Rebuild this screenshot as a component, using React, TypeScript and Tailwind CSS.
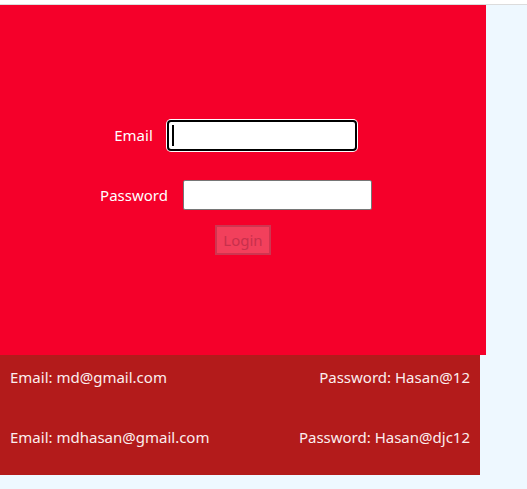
import React from "react";

const creds = [
  { email: "md@gmail.com", password: "Hasan@12" },
  { email: "mdhasan@gmail.com", password: "Hasan@djc12" },
];

export default function App() {
  return (
    <div
      className="min-h-screen bg-[#eef8ff] text-[15px]"
      style={{ fontFamily: '"Noto Sans", "Open Sans", sans-serif' }}
    >
      <div className="h-[5px] bg-white border-b border-[#dcdcdc]" />

      {/* login panel */}
      <div className="w-[486px] h-[350px] bg-[#f5002a] pt-[115px] flex flex-col">
        <div className="flex items-center justify-center pr-[15px]">
          <label className="text-white mr-[14px]">Email</label>
          <div className="relative w-[190px] h-[31px] rounded-[4px] border-2 border-black bg-white ring-1 ring-white">
            <span className="absolute left-[3px] top-[3px] w-[2px] h-[21px] bg-black" />
          </div>
        </div>

        <div className="flex items-center justify-center pr-[14px] mt-[29px]">
          <label className="text-white mr-[15px]">Password</label>
          <input className="w-[189px] h-[30px] border border-[#767676] bg-white rounded-[2px]" />
        </div>

        <div className="flex justify-center mt-[15px]">
          <button
            disabled
            className="w-[56px] h-[30px] bg-[#f2405c] border-2 border-[#cf3550] text-[#c8304c] leading-none"
          >
            Login
          </button>
        </div>
      </div>

      {/* saved credentials */}
      <div className="w-[480px] bg-[#b31b1b] text-[#fbeeee] flex flex-col gap-4 pb-4">
        {creds.map((c) => (
          <div key={c.email} className="h-[44px] px-[10px] flex items-center justify-between">
            <span>Email: {c.email}</span>
            <span>Password: {c.password}</span>
          </div>
        ))}
      </div>
    </div>
  );
}
